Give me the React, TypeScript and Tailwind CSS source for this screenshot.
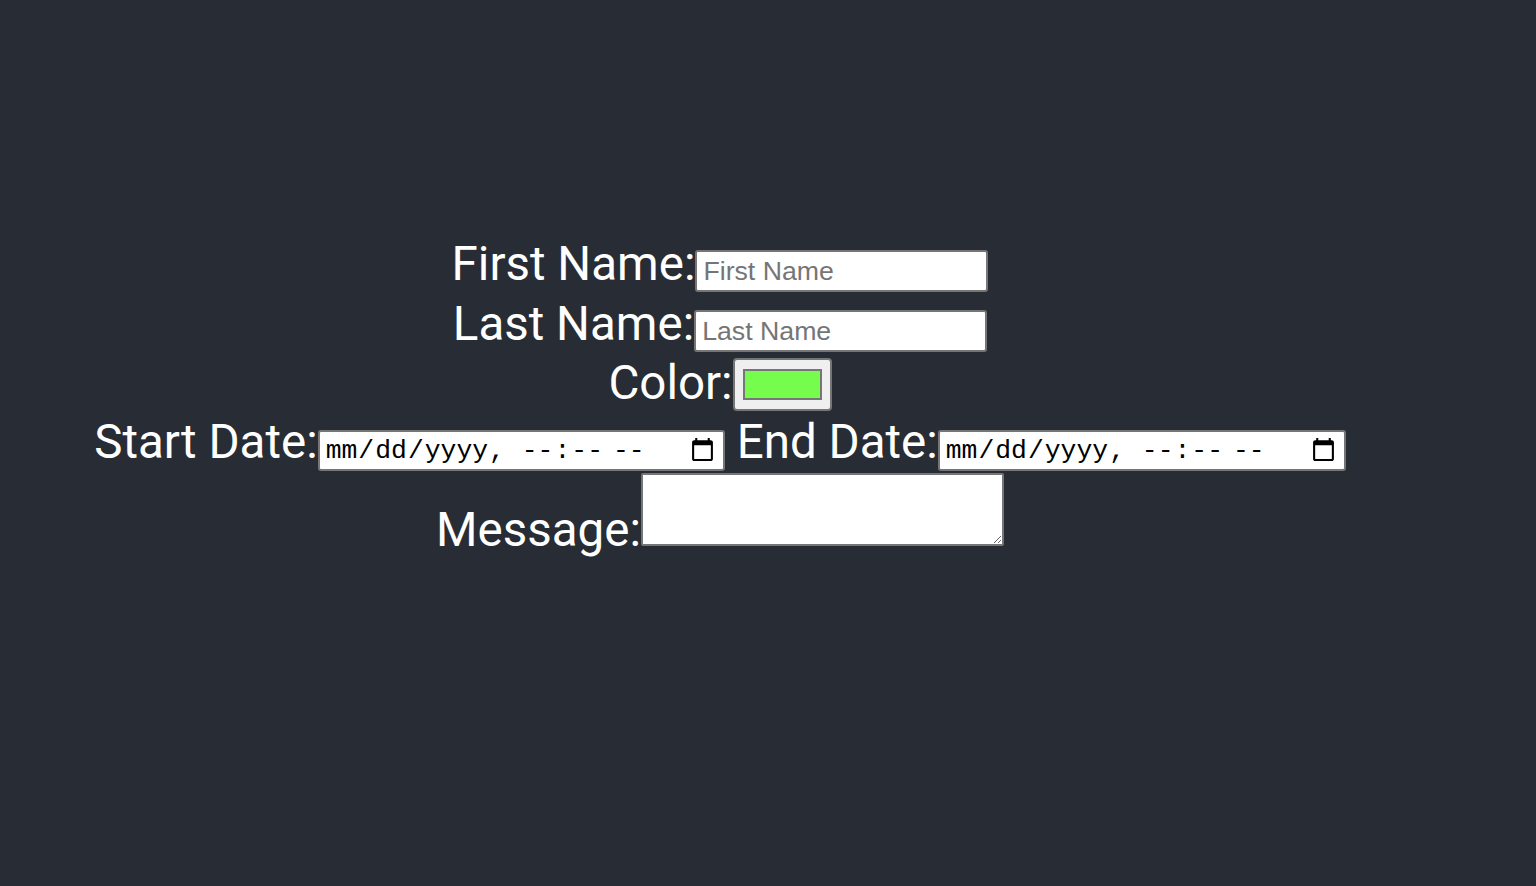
const textInput =
  "h-[42px] w-[293px] rounded-[3px] border-2 border-[#767676] bg-white px-[6px] font-['Liberation_Sans',sans-serif] text-[26.7px] text-black placeholder:text-[#757575]";

const dateInput =
  "h-[41px] rounded-[3px] border-2 border-[#767676] bg-white px-[5px] font-['Liberation_Mono',monospace] text-[26.4px] text-black [color-scheme:light]";

export default function App() {
  return (
    <div className="min-h-screen w-full bg-[#282c34] text-white">
      <div className="flex w-[1440px] flex-col pt-[240px] font-['Roboto',sans-serif] text-[47.5px] leading-[48px]">
        {/* names */}
        <label className="flex h-[60px] items-start justify-center">
          <span>First Name:</span>
          <input type="text" placeholder="First Name" className={`mt-[10px] ${textInput}`} />
        </label>
        <label className="flex h-[55px] items-start justify-center">
          <span>Last Name:</span>
          <input type="text" placeholder="Last Name" className={`mt-[10px] ${textInput}`} />
        </label>

        {/* color */}
        <label className="flex h-[63px] items-start justify-center">
          <span className="mt-[4px]">Color:</span>
          <input
            type="color"
            defaultValue="#76fc4c"
            className="mt-[3px] h-[53px] w-[99px] rounded-[4px] border-2 border-[#767676] bg-[#efefef] px-[6px] py-[5px] [&::-webkit-color-swatch]:border-2 [&::-webkit-color-swatch]:border-[#767676]"
          />
        </label>

        {/* dates */}
        <div className="flex h-[52px] items-start justify-center">
          <label className="flex items-start">
            <span>Start Date:</span>
            <input type="datetime-local" className={`mt-[12px] w-[407px] ${dateInput}`} />
          </label>
          <label className="ml-[12px] flex items-start">
            <span>End Date:</span>
            <input type="datetime-local" className={`mt-[12px] w-[408px] ${dateInput}`} />
          </label>
        </div>

        {/* message */}
        <label className="flex items-start justify-center">
          <span className="mt-[36px]">Message:</span>
          <textarea className="mt-[3px] h-[73px] w-[363px] rounded-[2px] border-2 border-[#767676] bg-white text-black" />
        </label>
      </div>
    </div>
  );
}
